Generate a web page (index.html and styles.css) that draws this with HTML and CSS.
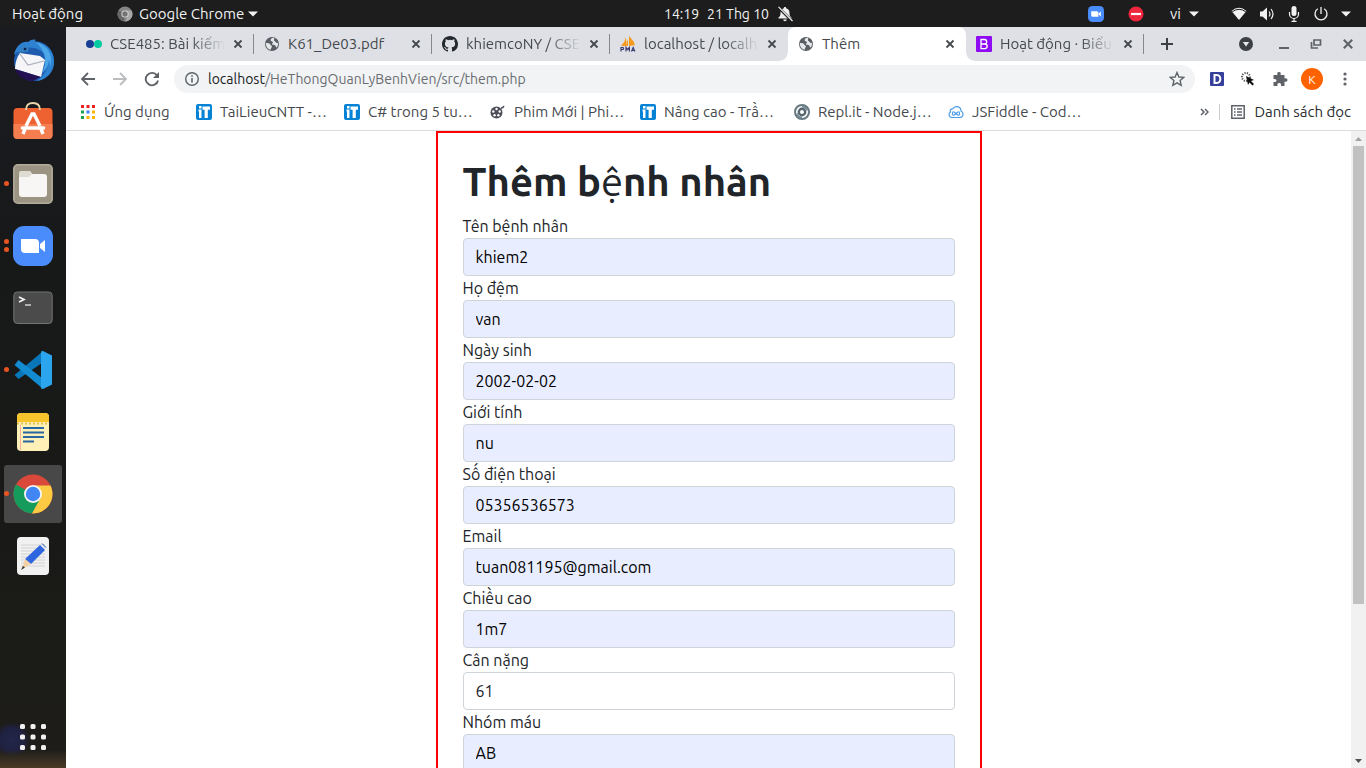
FILE: index.html
```html
<!DOCTYPE html>
<html lang="vi">
<head>
<meta charset="utf-8">
<title>Thêm</title>
<meta name="viewport" content="width=device-width, initial-scale=1">
<link rel="stylesheet" href="styles.css">
</head>
<body class="desktop">
<svg class="defs" aria-hidden="true">
  <symbol id="i-close" viewBox="0 0 10 10"><path d="M1.5 1.5l7 7M8.5 1.5l-7 7" stroke="currentColor" stroke-width="1.8" fill="none"/></symbol>
  <symbol id="i-globe" viewBox="0 0 16 16"><circle cx="8" cy="8" r="7" fill="#5a5e64"/><path d="M9 1.8c-1.6.5-2.6 1.400-2.300 2.700.3 1 2 .6 2.300 1.800.2 1-1.300 1-1 2 .3 1.200 2.300.2 3.300 1.200.8.8.2 1.900 1.200 2 1.400-1.200 1.700-3 1.600-4.400-1 0-2-.2-2.400-1.200-.4-1-2-.8-1.800-2C10 3 10.500 2.700 10.300 2zM1.900 7c1.700.2 3.600 0 4.300 1.400.6 1.200 1.700 1 1.700 2.200 0 1.400-1.300 1.400-1.200 3.200C4 13.400 1.700 10.800 1.900 7z" fill="#e6e7ea"/></symbol>
  <symbol id="i-it" viewBox="0 0 16 16"><rect width="16" height="16" rx="2" fill="#0483d6"/><path d="M3 2h2.500v2.500H3zM2.500 5.500h3V14H3V7.500h-.5zM6.500 2.500H14v3.300h-2.200V14H8.600V5.800H6.500z" fill="#fff"/></symbol>
  <symbol id="i-cam" viewBox="0 0 40 40"><rect width="40" height="40" rx="11" fill="#4a8cfb"/><path d="M8 13h14a4 4 0 0 1 4 4v10H12a4 4 0 0 1-4-4zM27 18l5-4v12l-5-4z" fill="#fff"/></symbol>
  <symbol id="i-caret" viewBox="0 0 10 6"><path d="M0 .5h10L5 5.500z" fill="currentColor"/></symbol>
</svg>

<header class="topbar">
  <div class="topbar-left">
    <button class="top-btn">Hoạt động</button>
    <button class="top-btn app-menu">
      <svg width="16" height="16" viewBox="0 0 16 16"><circle cx="8" cy="8" r="7.500" fill="#858585"/><path d="M8 8L1.500 4.300A7.500 7.500 0 0 0 7 15.400z" fill="#666"/><path d="M8 4.500h6.600A7.500 7.500 0 0 1 8 15.500l3-6z" fill="#a8a8a8"/><circle cx="8" cy="8" r="3.600" fill="#ddd"/><circle cx="8" cy="8" r="2.700" fill="#747474"/></svg>
      <span>Google Chrome</span>
      <svg width="10" height="6"><use href="#i-caret"/></svg>
    </button>
  </div>
  <button class="top-btn clock"><span>14:19</span><span>21 Thg 10</span>
    <svg width="16" height="16" viewBox="0 0 16 16"><path d="M8 1c.8 0 1.200.5 1.200 1.200C11.500 2.800 12.500 4.500 12.500 7c0 2.500.5 3.500 2 4.500v1H1.500v-1c1.500-1 2-2 2-4.500 0-2.500 1-4.200 3.300-4.800C6.800 1.500 7.200 1 8 1zM6.200 13.500h3.600a1.800 1.800 0 0 1-3.600 0z" fill="#eee"/><path d="M1 1l14 14" stroke="#1d1d1d" stroke-width="2.600"/><path d="M1.500 .8L15.500 15" stroke="#eee" stroke-width="1.200"/></svg>
  </button>
  <div class="topbar-right">
    <svg class="tray-zoom" width="16" height="16"><use href="#i-cam"/></svg>
    <svg class="tray-busy" width="16" height="16" viewBox="0 0 16 16"><circle cx="8" cy="8" r="7.500" fill="#f0263f"/><path d="M3 8h10" stroke="#fff" stroke-width="2.200"/></svg>
    <button class="top-btn lang">vi <svg width="10" height="6"><use href="#i-caret"/></svg></button>
    <button class="top-btn system" aria-label="Hệ thống">
      <svg width="16" height="16" viewBox="0 0 16 16"><path d="M.5 5Q8-1.500 15.500 5L8 14z" fill="#f2f2f2"/><path d="M1.200 5.800Q8 .8 14.800 5.800" stroke="#1d1d1d" stroke-width="1" fill="none"/></svg>
      <svg width="16" height="16" viewBox="0 0 16 16"><path d="M1 5.500h2.500L8 1.500v13l-4.500-4H1z" fill="#f2f2f2"/><path d="M10 5.500q2 2.500 0 5M12 3q4 5 0 10" stroke="#f2f2f2" stroke-width="1.200" fill="none"/></svg>
      <svg width="14" height="16" viewBox="-1 0 14 16"><rect x="3.500" y="0" width="5" height="10" rx="2.500" fill="#f2f2f2"/><path d="M1.500 6v2a4.500 4.500 0 0 0 9 0V6M6 12v3M3.500 15.300h5" stroke="#f2f2f2" stroke-width="1.200" fill="none"/></svg>
      <svg width="16" height="16" viewBox="0 0 16 16"><path d="M4.800 2.800a6 6 0 1 0 6.400 0M8 1v7" stroke="#f2f2f2" stroke-width="1.300" fill="none"/></svg>
      <svg width="10" height="6"><use href="#i-caret"/></svg>
    </button>
  </div>
</header>

<div class="workspace">
  <nav class="dock" aria-label="Dock">
    <button class="dock-item" aria-label="Thunderbird"><svg width="44" height="44" viewBox="0 0 44 44"><circle cx="23" cy="23" r="20" fill="#1e5cb0"/><path d="M3 17C5 7 12 3 17 4c3-3 7-3 8-2-2 1-1 2 0 2 9 1 17 7 18 18 1 12-8 20-17 21 9-7 14-17 9-25C28 8 14 6 3 17z" fill="#2d83d2"/><path d="M25 4c12 3 18 14 14 25 0-3 0-5-1-7-1 6-3 10-7 13 5-10 5-20-6-31z" fill="#4ba7e8"/><path d="M9 15l20 3 5 4-4 17-26-8c0-6 2-12 5-16z" fill="#f6f6f8"/><path d="M9 16l8 11 16-4" stroke="#a9afba" stroke-width="1.200" fill="none"/><path d="M4 31l26 8-8 4C14 43 7 39 4 31z" fill="#231052"/><path d="M7 16q2-10 10-7 2 2-1 5-4-1-9 2z" fill="#347fbf"/><circle cx="14" cy="11" r="1.300" fill="#0a234e"/></svg></button>
    <button class="dock-item" aria-label="Ubuntu Software"><svg width="42" height="42" viewBox="0 0 42 42"><rect x="1.500" y="7" width="39" height="31" rx="4" fill="#ee6130"/><path d="M1.500 23h39v11a4 4 0 0 1-4 4h-31a4 4 0 0 1-4-4z" fill="#f57e50"/><path d="M14 9q0-7 7-7t7 7" stroke="#e8d5aa" stroke-width="1.800" fill="none"/><path d="M14 25l6-12h2l6 12M11 33l2-5M31 33l-2-5" stroke="#fff" stroke-width="3.400" fill="none"/><path d="M10.500 27h21" stroke="#fff" stroke-width="3.600" stroke-linecap="round"/></svg></button>
    <button class="dock-item running" aria-label="Tệp"><svg width="40" height="40" viewBox="0 0 40 40"><rect x=".8" y=".8" width="38.400" height="38.400" rx="4" fill="#9b9483" stroke="#b3ac9b" stroke-width="1.500"/><path d="M6 10q0-3 3-3h8l2 3h12q3 0 3 3v17q0 3-3 3H9q-3 0-3-3z" fill="#f7f6f4"/><path d="M6 13h9q2 0 3-2l1-1-2-3H9q-3 0-3 3z" fill="#dedbd1"/></svg></button>
    <button class="dock-item running two" aria-label="Zoom"><svg width="40" height="40"><use href="#i-cam"/></svg></button>
    <button class="dock-item" aria-label="Terminal"><svg width="40" height="34" viewBox="0 0 40 34"><rect x=".8" y="1" width="38.400" height="31.500" rx="3.500" fill="#4b4b4b" stroke="#737373"/><path d="M6 6l5 2.500L6 11" stroke="#f3f3f3" stroke-width="1.700" fill="none"/><path d="M12 14h6" stroke="#ccc" stroke-width="1.600"/></svg></button>
    <button class="dock-item running" aria-label="Visual Studio Code"><svg width="40" height="40" viewBox="0 0 40 40"><path d="M1.500 25l4 4L29 13V2z" fill="#0876b9"/><path d="M1.500 15l4-5L29 28v10z" fill="#138bd1"/><path d="M28 1.500l2-.5 9 4.500v29L30 39l-2-.5z" fill="#2aa5ee"/></svg></button>
    <button class="dock-item" aria-label="Ghi chú"><svg width="34" height="40" viewBox="0 0 34 40"><rect x="1" y="1" width="32" height="38" rx="4" fill="#fff0b7"/><path d="M1 10V5q0-4 4-4h24q4 0 4 4v5z" fill="#f8c42c"/><path d="M1 11.500h32" stroke="#e7bd4b" stroke-width="1.800" stroke-dasharray="2 2"/><path d="M4.500 13v25" stroke="#f5b0a0"/><path d="M7 16h21M7 20.500h21M7 25h21M7 29.500h11" stroke="#2966a2" stroke-width="1.800"/></svg></button>
    <button class="dock-item running current" aria-label="Google Chrome"><svg width="40" height="40" viewBox="0 0 40 40"><circle cx="20" cy="20" r="19.500" fill="#d9483b"/><path d="M20 20L3 10.500A19.500 19.500 0 0 0 19 39.500L28.500 24z" fill="#159b5b"/><path d="M20 11.500h17.500A19.500 19.500 0 0 1 19 39.500L27.500 24z" fill="#fdcb43"/><circle cx="20" cy="20" r="9" fill="#f5f5f5"/><circle cx="20" cy="20" r="7.200" fill="#4285f4"/></svg></button>
    <button class="dock-item" aria-label="Trình soạn thảo"><svg width="34" height="40" viewBox="0 0 34 40"><rect x="1" y="1" width="32" height="38" rx="4" fill="#f1f1f1"/><path d="M5 9h24M5 12h24M5 15h24M5 18h24M5 21h24M5 24h24M5 27h24M5 30h24" stroke="#ccc" stroke-width=".8"/><path d="M24 9l5 5-14 14-6-5z" fill="#2d66df"/><path d="M26 7.500l4 4" stroke="#174bb1"/><path d="M9 23l6 5-9 5z" fill="#f4cfa4"/><path d="M7 30l2 1.500L5 34z" fill="#333"/></svg></button>
    <button class="dock-item show-apps" aria-label="Hiện ứng dụng"><svg width="28" height="28" viewBox="0 0 28 28" fill="#f1f1f1"><rect x="1" y="1" width="5" height="5" rx="1.500"/><rect x="11.500" y="1" width="5" height="5" rx="1.500"/><rect x="22" y="1" width="5" height="5" rx="1.500"/><rect x="1" y="11.500" width="5" height="5" rx="1.500"/><rect x="11.500" y="11.500" width="5" height="5" rx="1.500"/><rect x="22" y="11.500" width="5" height="5" rx="1.500"/><rect x="1" y="22" width="5" height="5" rx="1.500"/><rect x="11.500" y="22" width="5" height="5" rx="1.500"/><rect x="22" y="22" width="5" height="5" rx="1.500"/></svg></button>
  </nav>

  <div class="browser">
    <div class="tabstrip">
      <div class="tab">
        <svg width="16" height="16" viewBox="0 0 16 16"><circle cx="4" cy="8" r="4" fill="#173e92"/><circle cx="12" cy="8" r="4" fill="#00cba0"/></svg>
        <span class="tab-title faded">CSE485: Bài kiểm</span>
        <button class="tab-close" aria-label="Đóng"><svg width="10" height="10"><use href="#i-close"/></svg></button>
      </div>
      <div class="tab">
        <svg width="16" height="16"><use href="#i-globe"/></svg>
        <span class="tab-title">K61_De03.pdf</span>
        <button class="tab-close" aria-label="Đóng"><svg width="10" height="10"><use href="#i-close"/></svg></button>
      </div>
      <div class="tab">
        <svg width="16" height="16" viewBox="0 0 16 16"><path fill="#24292e" d="M8 0C3.580 0 0 3.580 0 8c0 3.540 2.290 6.530 5.470 7.590.4.070.55-.17.55-.38 0-.19-.010-.82-.010-1.490-2.010.37-2.530-.49-2.690-.94-.090-.23-.48-.94-.82-1.130-.28-.15-.68-.52-.010-.53.63-.010 1.080.58 1.230.82.72 1.210 1.870.87 2.330.66.070-.52.28-.87.510-1.070-1.780-.2-3.640-.89-3.640-3.950 0-.87.310-1.590.82-2.150-.080-.2-.36-1.020.080-2.120 0 0 .67-.21 2.200.82a7.600 7.600 0 0 1 4 0c1.530-1.040 2.200-.82 2.200-.82.44 1.100.16 1.920.080 2.120.51.56.82 1.270.82 2.150 0 3.070-1.870 3.750-3.650 3.950.29.25.54.73.54 1.480 0 1.070-.010 1.930-.010 2.200 0 .21.150.46.550.38A8.010 8.010 0 0 0 16 8c0-4.420-3.580-8-8-8z"/></svg>
        <span class="tab-title faded">khiemcoNY / CSE</span>
        <button class="tab-close" aria-label="Đóng"><svg width="10" height="10"><use href="#i-close"/></svg></button>
      </div>
      <div class="tab">
        <svg width="16" height="16" viewBox="0 0 16 16"><path d="M6 1v9H1Q5 6 6 1zM9 0q5 5 6 9l-6 1zM7 3q2 3 1 7H6z" fill="#f79a1c"/><path d="M1 15.500v-4h2q1.200 1 0 2H1M6 15.500v-4l1.700 2 1.700-2v4M11.500 15.500l1.700-4 1.700 4M12 14.500h2.500" stroke="#3b3c72" stroke-width="1.200" fill="none"/></svg>
        <span class="tab-title faded">localhost / localh</span>
        <button class="tab-close" aria-label="Đóng"><svg width="10" height="10"><use href="#i-close"/></svg></button>
      </div>
      <div class="tab active">
        <svg width="16" height="16"><use href="#i-globe"/></svg>
        <span class="tab-title">Thêm</span>
        <button class="tab-close" aria-label="Đóng"><svg width="10" height="10"><use href="#i-close"/></svg></button>
      </div>
      <div class="tab">
        <svg width="16" height="16" viewBox="0 0 16 16"><rect width="16" height="16" rx="1" fill="#8d0cf4"/><path d="M5 3.500h3.500q2.200.2 2.200 2.200T8.500 8H5zM5 8h3.800q2.400.2 2.400 2.300t-2.400 2.300H5z" stroke="#fff" stroke-width="1.300" fill="none"/></svg>
        <span class="tab-title faded">Hoạt động · Biểu</span>
        <button class="tab-close" aria-label="Đóng"><svg width="10" height="10"><use href="#i-close"/></svg></button>
      </div>
      <button class="new-tab" aria-label="Thẻ mới"><svg width="12" height="12" viewBox="0 0 12 12"><path d="M6 0v12M0 6h12" stroke="#3c4043" stroke-width="2"/></svg></button>
      <div class="window-controls">
        <button aria-label="Tìm thẻ"><svg width="14" height="14" viewBox="0 0 14 14"><circle cx="7" cy="7" r="7" fill="#3c4043"/><path d="M3.800 5h6.400L7 9.500z" fill="#e8e9ec"/></svg></button>
        <button aria-label="Thu nhỏ"><svg width="12" height="12" viewBox="0 0 12 12"><path d="M1 10h10" stroke="#606368" stroke-width="2"/></svg></button>
        <button aria-label="Khôi phục"><svg width="12" height="12" viewBox="0 0 12 12"><path d="M4 2h6.500v5H4zM1.500 4v6H8" fill="none" stroke="#606368" stroke-width="1.700"/></svg></button>
        <button aria-label="Đóng cửa sổ"><svg width="12" height="12" viewBox="0 0 10 10" color="#606368"><use href="#i-close"/></svg></button>
      </div>
    </div>

    <div class="toolbar">
      <div class="nav-buttons">
        <button aria-label="Quay lại"><svg width="16" height="16" viewBox="0 0 16 16"><path d="M15 8H2M8 2L2 8l6 6" stroke="#5f6368" stroke-width="1.800" fill="none"/></svg></button>
        <button aria-label="Tiến"><svg width="16" height="16" viewBox="0 0 16 16"><path d="M1 8h13M8 2l6 6-6 6" stroke="#babcbe" stroke-width="1.800" fill="none"/></svg></button>
        <button aria-label="Tải lại"><svg width="16" height="16" viewBox="0 0 16 16"><path d="M13 4.500a6.200 6.200 0 1 0 1 5" stroke="#5f6368" stroke-width="1.900" fill="none"/><path d="M15 1v6H9z" fill="#5f6368"/></svg></button>
      </div>
      <div class="omnibox">
        <svg width="16" height="16" viewBox="0 0 16 16"><circle cx="8" cy="8" r="6.300" stroke="#5f6368" stroke-width="1.400" fill="none"/><path d="M8 7v4.500M8 4.300v1.500" stroke="#5f6368" stroke-width="1.600"/></svg>
        <div class="url"><span class="url-host">localhost</span>/HeThongQuanLyBenhVien/src/them.php</div>
        <button aria-label="Dấu trang"><svg width="16" height="16" viewBox="0 0 16 16"><path d="M8 1.500l1.900 4.500 4.800.4-3.600 3.200 1.100 4.700L8 11.800l-4.200 2.500 1.100-4.700L1.300 6.400 6.100 6z" stroke="#5f6368" stroke-width="1.400" fill="none"/></svg></button>
      </div>
      <div class="extensions">
        <button aria-label="Tiện ích D"><svg width="14" height="14" viewBox="0 0 14 14"><rect width="14" height="14" rx="1" fill="#35409a"/><path d="M4.500 3h2.300Q10.300 3.200 10.300 7t-3.500 4H4.500z" stroke="#fff" stroke-width="2" fill="none"/></svg></button>
        <button aria-label="Tiện ích chuột"><svg width="16" height="14" viewBox="0 0 16 14"><circle cx="6" cy="5" r="4" fill="none" stroke="#555" stroke-width="2" stroke-dasharray="1.200 1.200"/><path d="M6 4l8 4-3 1 3 3-1.500 1.500-3-3L8 13z" fill="#111"/></svg></button>
        <button aria-label="Tiện ích"><svg width="16" height="16" viewBox="0 0 16 16"><path d="M1.500 4h4q-1-3 1.500-3t1.500 3h4v3.500q3-.8 3 1.500t-3 1.500V15H9q.5-3-1.800-3T5.500 15h-4v-4q3 .5 3-1.500t-3-1.500z" fill="#5f6368"/></svg></button>
        <button class="avatar">K</button>
        <button aria-label="Trình đơn"><svg width="4" height="14" viewBox="0 0 4 14" fill="#5f6368"><circle cx="2" cy="2" r="1.600"/><circle cx="2" cy="7" r="1.600"/><circle cx="2" cy="12" r="1.600"/></svg></button>
      </div>
    </div>

    <div class="bookmarks">
      <div class="bookmark-list">
        <a href="#"><svg width="16" height="14" viewBox="-1 0 16 14"><path d="M0 0h3v3H0zM5.500 0h3v3h-3zM11 0h3v3h-3z" fill="#ed2020"/><path d="M0 5.500h3v3H0zM0 11h3v3H0z" fill="#1fa050"/><path d="M5.500 5.500h3v3h-3z" fill="#3a7df2"/><path d="M11 5.500h3v3h-3zM5.500 11h3v3h-3zM11 11h3v3h-3z" fill="#fbb404"/></svg><span>Ứng dụng</span></a>
        <a href="#"><svg width="16" height="16"><use href="#i-it"/></svg><span>TaiLieuCNTT -…</span></a>
        <a href="#"><svg width="16" height="16"><use href="#i-it"/></svg><span>C# trong 5 tu…</span></a>
        <a href="#"><svg width="16" height="16" viewBox="0 0 16 16"><circle cx="6.500" cy="8.500" r="6" fill="#4b4e58"/><path d="M11 4q2 0 3-1.800" stroke="#4b4e58" stroke-width="1.600" fill="none"/><g fill="#fff"><circle cx="6.500" cy="5" r="1.200"/><circle cx="3.300" cy="7.500" r="1.200"/><circle cx="9.700" cy="7.500" r="1.200"/><circle cx="4.600" cy="11.300" r="1.200"/><circle cx="8.400" cy="11.300" r="1.200"/></g></svg><span>Phim Mới | Phi…</span></a>
        <a href="#"><svg width="16" height="16"><use href="#i-it"/></svg><span>Nâng cao - Trầ…</span></a>
        <a href="#"><svg width="16" height="16" viewBox="0 0 16 16"><circle cx="8" cy="8" r="7" fill="none" stroke="#667881" stroke-width="2"/><circle cx="8" cy="8" r="3.200" fill="none" stroke="#56666f" stroke-width="2.400"/><path d="M8 2.500a5.500 5.500 0 0 1 5 4M8 13.500a5.500 5.500 0 0 1-5-4" stroke="#7b8b94" stroke-width="1.800" fill="none"/></svg><span>Repl.it - Node.j…</span></a>
        <a href="#"><svg width="16" height="16" viewBox="0 0 16 16"><path d="M3.500 13.500a3 3 0 0 1-1-5.500 2 2 0 0 1 2-3q2-3 5-2.300 3.500 1 3.500 4.300a3.400 3.400 0 0 1-1 6.500z" fill="none" stroke="#4b9be8" stroke-width="1.200"/><path d="M8 9.500q-3.500-3.500-3.500 0T8 9.500t3.500 0T8 9.500z" fill="none" stroke="#4b9be8" stroke-width="1.200"/></svg><span>JSFiddle - Cod…</span></a>
      </div>
      <button class="more" aria-label="Dấu trang khác"><svg width="9" height="8" viewBox="0 0 9 8"><path d="M1 1l3 3-3 3M5 1l3 3-3 3" stroke="#5f6368" stroke-width="1.500" fill="none"/></svg></button>
      <button class="reading-list"><svg width="14" height="14" viewBox="0 0 14 14"><path d="M.8.8h12.400v12.400H.8z" fill="none" stroke="#5f6368" stroke-width="1.500"/><path d="M3 4h1.600M6 4h5M3 7h1.600M6 7h5M3 10h1.600M6 10h5" stroke="#5f6368" stroke-width="1.400"/></svg><span>Danh sách đọc</span></button>
    </div>

    <div class="viewport">
      <main class="page">
        <form class="patient-form">
          <h1>Thêm b<span class="light">ệ</span>nh nhân</h1>
          <label for="ten">Tên bệnh nhân</label>
          <input class="filled" id="ten" type="text" value="khiem2">
          <label for="ho">Họ đệm</label>
          <input class="filled" id="ho" type="text" value="van">
          <label for="ngay">Ngày sinh</label>
          <input class="filled" id="ngay" type="text" value="2002-02-02">
          <label for="gioi">Giới tính</label>
          <input class="filled" id="gioi" type="text" value="nu">
          <label for="sdt">Số điện thoại</label>
          <input class="filled" id="sdt" type="text" value="05356536573">
          <label for="email">Email</label>
          <input class="filled" id="email" type="text" value="tuan081195@gmail.com">
          <label for="cao">Chiều cao</label>
          <input class="filled" id="cao" type="text" value="1m7">
          <label for="nang">Cân nặng</label>
          <input id="nang" type="text" value="61">
          <label for="mau">Nhóm máu</label>
          <input class="filled" id="mau" type="text" value="AB">
        </form>
      </main>
      <div class="scrollbar">
        <button class="scroll-up" aria-label="Cuộn lên"><svg width="7" height="4" viewBox="0 0 7 4"><path d="M0 4h7L3.500 0z" fill="#a3a3a3"/></svg></button>
        <div class="scroll-track"><div class="scroll-thumb"></div></div>
        <button aria-label="Cuộn xuống"><svg width="7" height="4" viewBox="0 0 7 4"><path d="M0 0h7L3.500 4z" fill="#505050"/></svg></button>
      </div>
    </div>
  </div>
</div>
</body>
</html>
```
FILE: styles.css
```css
* { box-sizing: border-box; }

body, h1 { margin: 0; }

button {
  display: flex;
  align-items: center;
  justify-content: center;
  padding: 0;
  border: 0;
  background: none;
  color: inherit;
  font: inherit;
  flex-shrink: 0;
}

svg { flex-shrink: 0; display: block; }

.defs { position: absolute; width: 0; height: 0; }

.desktop {
  display: flex;
  flex-direction: column;
  height: 100vh;
  overflow: hidden;
  font-family: Ubuntu, "Noto Sans", sans-serif;
  font-size: 15px;
  background: #181818;
}

/* System bar */
.topbar {
  display: grid;
  grid-template-columns: 1fr auto 1fr;
  align-items: center;
  height: 27px;
  flex-shrink: 0;
  padding: 0 15px 0 12px;
  background: #1d1d1d;
  color: #f2f2f2;
  line-height: 20px;
}

.topbar-left { display: flex; gap: 34px; }
.app-menu { gap: 6px; }
.app-menu svg:last-child { margin-left: -2px; }
.clock { gap: 8px; margin-left: 94px; font-size: 14px; }
.topbar-right { display: flex; align-items: center; justify-content: flex-end; }
.tray-zoom { margin-right: 24px; }
.tray-busy { margin-right: 26px; }
.lang { gap: 8px; margin-right: 32px; }
.system { gap: 12px; }

/* Dock and browser */
.workspace { display: flex; flex: 1; min-height: 0; }

.dock {
  display: flex;
  flex-direction: column;
  gap: 4px;
  width: 66px;
  flex-shrink: 0;
  padding: 4px 4px 2px;
  background:
    linear-gradient(to top, #4b3a25 0, #2d281f 12px, transparent 18px),
    radial-gradient(circle at 12px calc(100% - 28px), #24264a 0, #1f2140 12px, transparent 18px),
    linear-gradient(#191b21, #171919 30%, #191a17 70%, #1e1d1a);
}

.dock-item {
  position: relative;
  width: 58px;
  height: 58px;
  border-radius: 3px;
}

.current { background: #484848; }

.running::before {
  content: "";
  position: absolute;
  left: 0;
  top: 26px;
  width: 5px;
  height: 5px;
  border-radius: 50%;
  background: #e95420;
}

.two::before { top: 22px; box-shadow: 0 8px #e95420; }
.show-apps { margin-top: auto; }

.browser {
  display: flex;
  flex-direction: column;
  flex: 1;
  min-width: 0;
  background: #fff;
  color: #45494d;
}

.tabstrip {
  display: flex;
  align-items: center;
  height: 34px;
  flex-shrink: 0;
  padding: 0 12px 0 10px;
  background: #dee0e5;
}

.tab {
  position: relative;
  display: flex;
  align-items: center;
  gap: 8px;
  flex: 0 1 178px;
  min-width: 0;
  height: 34px;
  padding: 0 11px 0 10px;
}

.tab::after {
  content: "";
  position: absolute;
  right: 0;
  top: 7px;
  width: 1px;
  height: 20px;
  background: #85888d;
}

.tab:has(+ .active)::after { display: none; }

.active {
  background: #fff;
  border-radius: 8px 8px 0 0;
}

.active::before,
.active::after {
  content: "";
  position: absolute;
  top: auto;
  bottom: 0;
  width: 8px;
  height: 8px;
}

.active::before { left: -8px; background: radial-gradient(circle at 0 0, transparent 7px, #fff 8px); }
.active::after { right: -8px; background: radial-gradient(circle at 100% 0, transparent 7px, #fff 8px); }

.tab-title {
  flex: 1;
  min-width: 0;
  white-space: nowrap;
  line-height: 20px;
}

.faded { mask-image: linear-gradient(to right, #000 calc(100% - 34px), transparent); }

.tab-close { width: 10px; height: 10px; color: #45494d; }
.new-tab { width: 28px; height: 28px; margin-left: 9px; }
.window-controls { display: flex; align-items: center; gap: 20px; margin-left: auto; }
.window-controls button:first-child { margin-right: 5px; }

.toolbar {
  display: flex;
  align-items: center;
  height: 36px;
  flex-shrink: 0;
  padding: 0 19px 0 14px;
}

.nav-buttons { display: flex; gap: 16px; margin-right: 14px; }

.omnibox {
  display: flex;
  align-items: center;
  gap: 8px;
  flex: 1;
  min-width: 0;
  height: 28px;
  padding: 0 10px;
  border-radius: 14px;
  background: #f1f3f4;
}

.url { flex: 1; color: #6a6e72; font-size: 14px; white-space: nowrap; line-height: 20px; overflow: hidden; }
.url-host { color: #202124; }

.extensions { display: flex; align-items: center; gap: 16px; margin-left: 15px; }

.extensions .avatar {
  width: 22px;
  height: 22px;
  margin: 0 4px 0 -3px;
  border-radius: 50%;
  background: #ff6200;
  color: #fff;
  font-size: 12px;
}

.bookmarks {
  display: flex;
  align-items: center;
  height: 34px;
  flex-shrink: 0;
  padding: 0 15px 4px 14px;
  border-bottom: 1px solid #d9dbde;
}

.bookmark-list {
  display: grid;
  grid-template-columns: 116px 148px 146px 150px 154px 154px 150px;
  flex: 1;
  min-width: 0;
  overflow: hidden;
}

.bookmark-list a {
  display: flex;
  align-items: center;
  gap: 8px;
  color: inherit;
  text-decoration: none;
  white-space: nowrap;
  line-height: 20px;
}

.more { margin-right: 10px; }

.reading-list {
  gap: 9px;
  padding-left: 11px;
  border-left: 1px solid #c8cacd;
  color: #2b2e31;
  line-height: 16px;
}

/* Page */
.viewport { display: flex; flex: 1; min-height: 0; }
.page { flex: 1; min-width: 0; overflow: hidden; color: #212529; font-size: 16px; }

.patient-form {
  max-width: 546px;
  margin: 0 auto;
  padding: 25px;
  border: 2px solid #f00;
}

.patient-form h1 {
  margin-bottom: 8px;
  font-size: 40px;
  font-weight: 600;
  line-height: 48px;
}

.light { font-weight: 400; }

.patient-form label { display: block; line-height: 24px; }

.patient-form input {
  display: block;
  width: 100%;
  height: 38px;
  padding: 6px 12px;
  border: 1px solid #ced4da;
  border-radius: 4px;
  background: #fff;
  color: #212529;
  font: inherit;
  line-height: 24px;
}

.patient-form .filled { background: #e8edff; color: #000; }

.scrollbar { display: flex; flex-direction: column; width: 15px; flex-shrink: 0; background: #f1f1f1; }
.scrollbar button { height: 15px; }
.scroll-track { flex: 1; padding: 0 2px; }
.scroll-thumb { height: 75.5%; background: #c1c1c1; }
```
